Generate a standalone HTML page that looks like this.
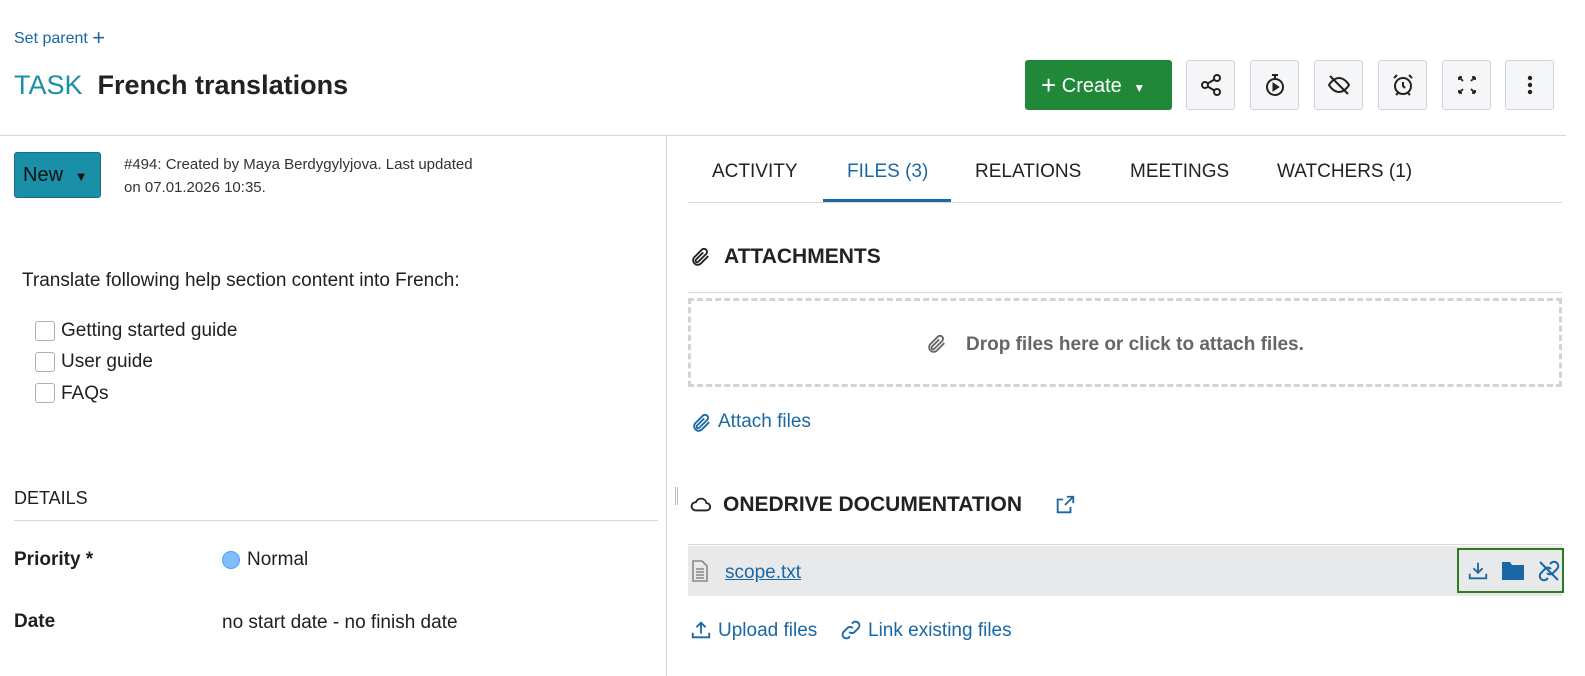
<!DOCTYPE html>
<html><head><meta charset="utf-8"><style>
*{box-sizing:border-box;margin:0;padding:0}
body{width:1585px;height:675px;overflow:hidden;background:#fff;font-family:"Liberation Sans",sans-serif;color:#1f1f1f;position:relative}
.a{position:absolute}
.blue{color:#1a67a3}
.btn{position:absolute;top:60px;width:49px;height:50px;border:1px solid #d0d4da;border-radius:3px;background:#f5f6f8;display:flex;align-items:center;justify-content:center}
.tab{position:absolute;top:161px;font-size:19px;font-weight:500;color:#222}
.cb{position:absolute;left:35px;width:20px;height:20px;border:1px solid #b0b0b0;border-radius:3px}
</style></head><body>
<div class="a blue" style="left:14px;top:25px;font-size:16px">Set parent <span style="font-size:22px;vertical-align:-2px">+</span></div>
<div class="a" style="left:14px;top:70px;font-size:27px"><span style="color:#1a8fa8">TASK</span>&nbsp; <span style="font-weight:bold;color:#222">French translations</span></div>
<div class="a" style="left:1025px;top:60px;width:147px;height:50px;background:#218739;border-radius:3px;color:#fff;font-size:20px;line-height:50px;padding-left:16px"><span style="font-size:26px;vertical-align:-2px">+</span> Create <span style="font-size:12px;margin-left:6px">▼</span></div>
<div class="btn" style="left:1186px"><svg width="24" height="24" viewBox="0 0 24 24" fill="none" stroke="#222" stroke-width="2"><circle cx="18" cy="5" r="3"/><circle cx="6" cy="12" r="3"/><circle cx="18" cy="19" r="3"/><path d="M8.6 13.5l6.8 4M15.4 6.5l-6.8 4"/></svg></div>
<div class="btn" style="left:1250px"><svg width="24" height="24" viewBox="0 0 24 24" fill="none" stroke="#222" stroke-width="2"><circle cx="12" cy="14" r="8"/><path d="M9 2h6M12 2v4"/><path d="M10.5 11v6l4.5-3z" fill="#222"/></svg></div>
<div class="btn" style="left:1314px"><svg width="24" height="24" viewBox="0 0 24 24" fill="none" stroke="#222" stroke-width="2"><path d="M2 12s4-7 10-7 10 7 10 7-4 7-10 7S2 12 2 12z"/><path d="M3 3l18 18"/></svg></div>
<div class="btn" style="left:1378px"><svg width="24" height="24" viewBox="0 0 24 24" fill="none" stroke="#222" stroke-width="2"><circle cx="12" cy="13" r="8"/><path d="M12 9v4l2 2M3 5l3-3M21 5l-3-3M7 20l-2 2M17 20l2 2"/></svg></div>
<div class="btn" style="left:1442px"><svg width="24" height="24" viewBox="0 0 24 24" fill="none" stroke="#222" stroke-width="1.8"><path d="M4 4l4 4M4 4v3M4 4h3M20 4l-4 4M20 4v3M20 4h-3M4 20l4-4M4 20v-3M4 20h3M20 20l-4-4M20 20v-3M20 20h-3"/></svg></div>
<div class="btn" style="left:1505px"><svg width="24" height="24" viewBox="0 0 24 24" fill="#222"><circle cx="12" cy="5" r="2.2"/><circle cx="12" cy="12" r="2.2"/><circle cx="12" cy="19" r="2.2"/></svg></div>
<div class="a" style="left:0;top:135px;width:1566px;height:1px;background:#d8d8d8"></div>
<div class="a" style="left:666px;top:136px;width:1px;height:540px;background:#d8d8d8"></div>
<div class="a" style="left:14px;top:152px;width:87px;height:46px;background:#1a8fa8;border:1px solid #126f84;border-radius:3px;color:#111;font-size:20px;line-height:44px;padding-left:8px">New <span style="font-size:13px;margin-left:6px">▼</span></div>
<div class="a" style="left:124px;top:153px;font-size:15px;line-height:23px;color:#333">#494: Created by Maya Berdygylyjova. Last updated<br>on 07.01.2026 10:35.</div>
<div class="a" style="left:22px;top:270px;font-size:19px">Translate following help section content into French:</div>
<div class="cb" style="top:321px"></div><div class="a" style="left:61px;top:320px;font-size:19px">Getting started guide</div>
<div class="cb" style="top:352px"></div><div class="a" style="left:61px;top:351px;font-size:19px">User guide</div>
<div class="cb" style="top:383px"></div><div class="a" style="left:61px;top:383px;font-size:19px">FAQs</div>
<div class="a" style="left:14px;top:488px;font-size:18px;font-weight:500">DETAILS</div>
<div class="a" style="left:14px;top:520px;width:644px;height:1px;background:#d8d8d8"></div>
<div class="a" style="left:14px;top:549px;font-size:19px;font-weight:bold">Priority *</div>
<div class="a" style="left:222px;top:551px;width:18px;height:18px;border-radius:50%;background:#7fbfff;border:1px solid #5a9fe0"></div>
<div class="a" style="left:247px;top:549px;font-size:19px">Normal</div>
<div class="a" style="left:14px;top:611px;font-size:19px;font-weight:bold">Date</div>
<div class="a" style="left:222px;top:612px;font-size:19px">no start date - no finish date</div>
<div class="tab" style="left:712px">ACTIVITY</div>
<div class="tab" style="left:847px;color:#1a67a3">FILES (3)</div>
<div class="tab" style="left:975px">RELATIONS</div>
<div class="tab" style="left:1130px">MEETINGS</div>
<div class="tab" style="left:1277px">WATCHERS (1)</div>
<div class="a" style="left:688px;top:202px;width:874px;height:1px;background:#d8d8d8"></div>
<div class="a" style="left:823px;top:199px;width:128px;height:3px;background:#1a67a3"></div>
<svg class="a" style="left:689px;top:246px" width="22" height="22" viewBox="0 0 24 24" fill="none" stroke="#222" stroke-width="2"><path d="M21 11l-8.5 8.5a5 5 0 01-7-7L14 4a3.3 3.3 0 014.7 4.7L10 17.3a1.7 1.7 0 01-2.4-2.4L15.5 7"/></svg>
<div class="a" style="left:724px;top:245px;font-size:21px;font-weight:bold;color:#222">ATTACHMENTS</div>
<div class="a" style="left:688px;top:292px;width:874px;height:1px;background:#d8d8d8"></div>
<div class="a" style="left:688px;top:298px;width:874px;height:89px;border:3px dashed #d4d4d4"></div>
<svg class="a" style="left:925px;top:333px" width="22" height="22" viewBox="0 0 24 24" fill="none" stroke="#666" stroke-width="2"><path d="M21 11l-8.5 8.5a5 5 0 01-7-7L14 4a3.3 3.3 0 014.7 4.7L10 17.3a1.7 1.7 0 01-2.4-2.4L15.5 7"/></svg>
<div class="a" style="left:966px;top:334px;font-size:19px;font-weight:bold;color:#666">Drop files here or click to attach files.</div>
<svg class="a" style="left:690px;top:412px" width="22" height="22" viewBox="0 0 24 24" fill="none" stroke="#1a67a3" stroke-width="2"><path d="M21 11l-8.5 8.5a5 5 0 01-7-7L14 4a3.3 3.3 0 014.7 4.7L10 17.3a1.7 1.7 0 01-2.4-2.4L15.5 7"/></svg>
<div class="a blue" style="left:718px;top:411px;font-size:19px">Attach files</div>
<div class="a" style="left:675px;top:487px;width:3px;height:18px;border-left:1px solid #bbb;border-right:1px solid #bbb"></div>
<svg class="a" style="left:690px;top:494px" width="22" height="20" viewBox="0 0 24 20" fill="none" stroke="#222" stroke-width="2"><path d="M6 17h12a4 4 0 000-8 6 6 0 00-11.5-1A4.5 4.5 0 006 17z"/></svg>
<div class="a" style="left:723px;top:493px;font-size:21px;font-weight:bold;color:#222">ONEDRIVE DOCUMENTATION</div>
<svg class="a" style="left:1054px;top:494px" width="22" height="22" viewBox="0 0 24 24" fill="none" stroke="#1a67a3" stroke-width="2"><path d="M14 3h7v7M21 3l-9 9M18 14v6H4V6h6"/></svg>
<div class="a" style="left:688px;top:544px;width:874px;height:1px;background:#d8d8d8"></div>
<div class="a" style="left:688px;top:546px;width:874px;height:50px;background:#e8e9eb"></div>
<svg class="a" style="left:692px;top:560px" width="16" height="22" viewBox="0 0 16 22" fill="none" stroke="#888" stroke-width="1.6"><path d="M1 1h9l5 5v15H1z"/><path d="M4 9h8M4 12h8M4 15h8M4 18h8"/></svg>
<div class="a blue" style="left:725px;top:562px;font-size:19px;text-decoration:underline">scope.txt</div>
<div class="a" style="left:1457px;top:548px;width:107px;height:45px;border:2px solid #2d7a1f"></div>
<svg class="a" style="left:1467px;top:560px" width="22" height="22" viewBox="0 0 24 24" fill="none" stroke="#1a67a3" stroke-width="2"><path d="M12 3v11M7 9l5 5 5-5M3 15v5h18v-5"/></svg>
<svg class="a" style="left:1501px;top:559px" width="24" height="22" viewBox="0 0 24 22" fill="#1a67a3"><path d="M1 3h8l2 3h12v15H1z"/></svg>
<svg class="a" style="left:1537px;top:559px" width="24" height="24" viewBox="0 0 24 24" fill="none" stroke="#1a67a3" stroke-width="2"><path d="M10 14a4 4 0 006 0l4-4a4 4 0 00-6-6l-1 1M14 10a4 4 0 00-6 0l-4 4a4 4 0 006 6l1-1M3 3l18 18"/></svg>
<svg class="a" style="left:690px;top:619px" width="22" height="22" viewBox="0 0 24 24" fill="none" stroke="#1a67a3" stroke-width="2"><path d="M12 16V4M7 9l5-5 5 5M3 15v5h18v-5"/></svg>
<div class="a blue" style="left:718px;top:620px;font-size:19px">Upload files</div>
<svg class="a" style="left:840px;top:619px" width="22" height="22" viewBox="0 0 24 24" fill="none" stroke="#1a67a3" stroke-width="2"><path d="M10 14a4 4 0 006 0l4-4a4 4 0 00-6-6l-1 1M14 10a4 4 0 00-6 0l-4 4a4 4 0 006 6l1-1"/></svg>
<div class="a blue" style="left:868px;top:620px;font-size:19px">Link existing files</div>
</body></html>
